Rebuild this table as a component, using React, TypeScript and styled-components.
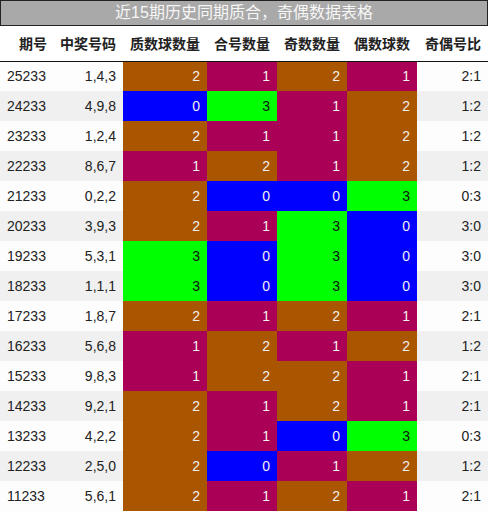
import React from 'react';
import styled, { createGlobalStyle } from 'styled-components';

const GlobalStyle = createGlobalStyle`
  html, body {
    margin: 0;
    padding: 0;
    background: #ffffff;
  }
  body {
    font-family: "Liberation Sans", "Noto Sans CJK SC", sans-serif;
    color: #222;
  }
`;

type Row = [string, string, number, number, number, number, string];

const rows: Row[] = [
  ['25233', '1,4,3', 2, 1, 2, 1, '2:1'],
  ['24233', '4,9,8', 0, 3, 1, 2, '1:2'],
  ['23233', '1,2,4', 2, 1, 1, 2, '1:2'],
  ['22233', '8,6,7', 1, 2, 1, 2, '1:2'],
  ['21233', '0,2,2', 2, 0, 0, 3, '0:3'],
  ['20233', '3,9,3', 2, 1, 3, 0, '3:0'],
  ['19233', '5,3,1', 3, 0, 3, 0, '3:0'],
  ['18233', '1,1,1', 3, 0, 3, 0, '3:0'],
  ['17233', '1,8,7', 2, 1, 2, 1, '2:1'],
  ['16233', '5,6,8', 1, 2, 1, 2, '1:2'],
  ['15233', '9,8,3', 1, 2, 2, 1, '2:1'],
  ['14233', '9,2,1', 2, 1, 2, 1, '2:1'],
  ['13233', '4,2,2', 2, 1, 0, 3, '0:3'],
  ['12233', '2,5,0', 2, 0, 1, 2, '1:2'],
  ['11233', '5,6,1', 2, 1, 2, 1, '2:1'],
];

const headers = ['期号', '中奖号码', '质数球数量', '合号数量', '奇数数量', '偶数球数', '奇偶号比'];
const widths = [54, 69, 84, 70, 70, 70, 71];

const countColors: Record<number, string> = {
  0: '#0000ff',
  1: '#aa0055',
  2: '#aa5500',
  3: '#00ff00',
};

const Wrapper = styled.div`
  width: 488px;
`;

const TitleBar = styled.div`
  height: 24px;
  border: 1px solid #222;
  background: #a9a9a9;
  color: #f6f6f6;
  font-size: 16px;
  line-height: 24px;
  text-align: center;
`;

const Table = styled.table`
  width: 488px;
  border-collapse: collapse;
  table-layout: fixed;
`;

const HeadRow = styled.tr`
  height: 35px;
  border-bottom: 1px solid #111;
  background: #ffffff;
`;

const HeadCell = styled.th`
  padding: 0 7px 0 0;
  text-align: right;
  font-size: 14px;
  font-weight: bold;
  color: #222;
  white-space: nowrap;
`;

const BodyRow = styled.tr<{ $alt: boolean }>`
  height: 30px;
  background: ${p => (p.$alt ? '#f0f0f0' : '#fdfdfd')};
`;

const Cell = styled.td<{ $left?: boolean }>`
  padding: ${p => (p.$left ? '0 0 0 7px' : '0 7px 0 0')};
  text-align: ${p => (p.$left ? 'left' : 'right')};
  font-size: 14px;
  color: #222;
  white-space: nowrap;
`;

const CountCell = styled.td<{ $count: number }>`
  padding: 0 7px 0 0;
  text-align: right;
  font-size: 14px;
  background: ${p => countColors[p.$count]};
  color: ${p => (p.$count === 3 ? '#111' : '#f0f0f0')};
`;

const App: React.FC = () => {
  return (
    <Wrapper>
      <GlobalStyle />
      <TitleBar>近15期历史同期质合，奇偶数据表格</TitleBar>
      <Table>
        <colgroup>
          {widths.map((w, i) => (
            <col key={i} style={{ width: w }} />
          ))}
        </colgroup>
        <thead>
          <HeadRow>
            {headers.map(h => (
              <HeadCell key={h}>{h}</HeadCell>
            ))}
          </HeadRow>
        </thead>
        <tbody>
          {rows.map((r, i) => (
            <BodyRow key={r[0]} $alt={i % 2 === 1}>
              <Cell $left>{r[0]}</Cell>
              <Cell>{r[1]}</Cell>
              <CountCell $count={r[2]}>{r[2]}</CountCell>
              <CountCell $count={r[3]}>{r[3]}</CountCell>
              <CountCell $count={r[4]}>{r[4]}</CountCell>
              <CountCell $count={r[5]}>{r[5]}</CountCell>
              <Cell>{r[6]}</Cell>
            </BodyRow>
          ))}
        </tbody>
      </Table>
    </Wrapper>
  );
};

export default App;
